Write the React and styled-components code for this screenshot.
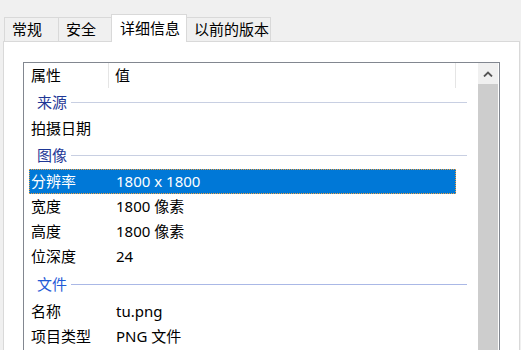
import React from "react";
import styled, { createGlobalStyle } from "styled-components";

const Global = createGlobalStyle`
  html, body { margin: 0; padding: 0; background: #f0f0f0; }
  body { font-family: "Noto Sans", "Noto Sans CJK SC", sans-serif; font-size: 15px; color: #000; }
`;

const Window = styled.div`
  width: 521px;
  height: 350px;
  overflow: hidden;
  background: #f0f0f0;
  display: flex;
  flex-direction: column;
`;

const TabStrip = styled.div`
  display: flex;
  align-items: flex-end;
  padding: 14px 0 0 4px;
  height: 41px;
  box-sizing: border-box;
`;

const Tab = styled.div`
  box-sizing: border-box;
  width: ${(p) => p.$w}px;
  height: ${(p) => (p.$active ? 28 : 24)}px;
  margin-left: ${(p) => (p.$first ? 0 : -1)}px;
  margin-bottom: ${(p) => (p.$active ? -1 : 0)}px;
  padding-left: ${(p) => (p.$active ? 8 : 7)}px;
  border: 1px solid #d9d9d9;
  border-bottom: none;
  background: ${(p) => (p.$active ? "#ffffff" : "#f0f0f0")};
  position: relative;
  z-index: ${(p) => (p.$active ? 2 : 1)};
  display: flex;
  align-items: center;
  padding-bottom: ${(p) => (p.$active ? 1 : 0)}px;
  white-space: nowrap;
  line-height: 1;
`;

const Panel = styled.div`
  margin-left: 3px;
  width: 517px;
  flex: 1;
  box-sizing: border-box;
  border: 1px solid #d9d9d9;
  background: #ffffff;
  padding: 20px 0 0 19px;
`;

const ListBox = styled.div`
  width: 477px;
  height: 400px;
  box-sizing: border-box;
  border: 1px solid #828790;
  background: #fff;
  display: flex;
`;

const ListArea = styled.div`
  flex: 1;
  display: flex;
  flex-direction: column;
`;

const Header = styled.div`
  display: flex;
  height: 25px;
  flex-shrink: 0;
`;

const HeaderCell = styled.div`
  box-sizing: border-box;
  width: ${(p) => p.$w}px;
  padding-left: ${(p) => p.$pad}px;
  border-right: 1px solid #e5e5e5;
  display: flex;
  align-items: center;
  line-height: 1;
`;

const GroupRow = styled.div`
  height: ${(p) => (p.$hot ? 30 : 28)}px;
  flex-shrink: 0;
  display: flex;
  align-items: center;
  padding-left: 13px;
  width: 443px;
  box-sizing: border-box;
  gap: 4px;
`;

const GroupLabel = styled.span`
  color: ${(p) => (p.$hot ? "#1f5ad6" : "#1e3796")};
  line-height: 1;
`;

const GroupLine = styled.div`
  flex: 1;
  height: 1px;
  background: ${(p) => (p.$hot ? "#aab8e6" : "#c8cfe2")};
`;

const Row = styled.div`
  height: 25px;
  flex-shrink: 0;
  margin-left: 5px;
  width: 427px;
  box-sizing: border-box;
  display: flex;
  align-items: center;
  line-height: 1;
  background: ${(p) => (p.$selected ? "#0078d7" : "transparent")};
  color: ${(p) => (p.$selected ? "#ffffff" : "#000000")};
  border: 1px dotted ${(p) => (p.$selected ? "#f0a040" : "transparent")};
  padding-left: 1px;
`;

const NameCell = styled.span`
  width: 85px;
  flex-shrink: 0;
`;

const ValueCell = styled.span``;

const ScrollBar = styled.div`
  width: 20px;
  margin-right: 1px;
  display: flex;
  flex-direction: column;
  background: #f0f0f0;
`;

const ScrollButton = styled.div`
  height: 21px;
  display: flex;
  align-items: center;
  justify-content: center;
  background: #f0f0f0;
`;

const Thumb = styled.div`
  flex: 1;
  background: #cdcdcd;
`;

const tabs = [
  { label: "常规", w: 55 },
  { label: "安全", w: 54 },
  { label: "详细信息", w: 76, active: true },
  { label: "以前的版本", w: 85 },
];

const sections = [
  { group: "来源", rows: [{ name: "拍摄日期", value: "" }] },
  {
    group: "图像",
    rows: [
      { name: "分辨率", value: "1800 x 1800", selected: true },
      { name: "宽度", value: "1800 像素" },
      { name: "高度", value: "1800 像素" },
      { name: "位深度", value: "24" },
    ],
  },
  {
    group: "文件",
    hot: true,
    rows: [
      { name: "名称", value: "tu.png" },
      { name: "项目类型", value: "PNG 文件" },
    ],
  },
];

export default function App() {
  return (
    <Window>
      <Global />
      <TabStrip>
        {tabs.map((t, i) => (
          <Tab key={t.label} $w={t.w} $active={t.active} $first={i === 0}>
            {t.label}
          </Tab>
        ))}
      </TabStrip>
      <Panel>
        <ListBox>
          <ListArea>
            <Header>
              <HeaderCell $w={85} $pad={7}>属性</HeaderCell>
              <HeaderCell $w={347} $pad={6}>值</HeaderCell>
            </Header>
            {sections.map((s) => (
              <React.Fragment key={s.group}>
                <GroupRow $hot={s.hot}>
                  <GroupLabel $hot={s.hot}>{s.group}</GroupLabel>
                  <GroupLine $hot={s.hot} />
                </GroupRow>
                {s.rows.map((r) => (
                  <Row key={r.name} $selected={r.selected}>
                    <NameCell>{r.name}</NameCell>
                    <ValueCell>{r.value}</ValueCell>
                  </Row>
                ))}
              </React.Fragment>
            ))}
          </ListArea>
          <ScrollBar>
            <ScrollButton>
              <svg width="10" height="6" viewBox="0 0 10 6">
                <polyline points="1,5.5 5,1.5 9,5.5" fill="none" stroke="#555555" strokeWidth="1.8" />
              </svg>
            </ScrollButton>
            <Thumb />
          </ScrollBar>
        </ListBox>
      </Panel>
    </Window>
  );
}
